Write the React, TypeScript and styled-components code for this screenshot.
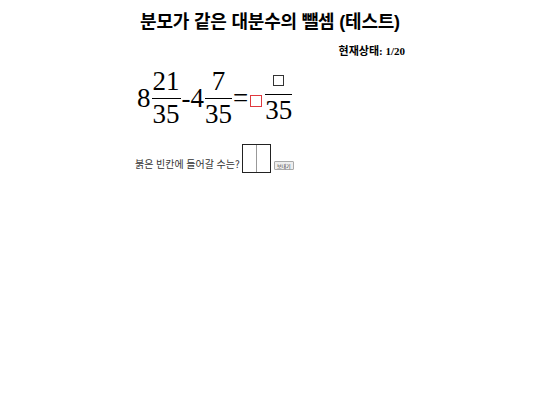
import React from "react";
import styled, { createGlobalStyle } from "styled-components";

const Global = createGlobalStyle`
  html, body { margin: 0; padding: 0; background: #fff; }
  body { font-family: "Liberation Serif", "Noto Sans CJK KR", serif; color: #000; }
`;

const Page = styled.div`
  width: 270px;
  margin: 0 auto;
  padding-top: 10px;
`;

const Title = styled.h2`
  margin: 0;
  font-family: "Liberation Sans", "Noto Sans CJK KR", sans-serif;
  font-size: 18px;
  font-weight: 700;
  text-align: center;
  line-height: 24px;
  letter-spacing: -0.2px;
`;

const Status = styled.div`
  margin-top: 9px;
  text-align: right;
  font-size: 11px;
  font-weight: 700;
  line-height: 14px;
`;

const Hangul = styled.span`
  font-family: "Noto Sans CJK KR", sans-serif;
`;

const MathRow = styled.div`
  margin-top: 10px;
  display: flex;
  align-items: center;
  font-family: "Liberation Serif", serif;
  font-size: 27px;
  line-height: 1;
  padding-left: 2px;
`;

const Whole = styled.span`
  display: inline-block;
`;

const Frac = styled.span`
  display: inline-flex;
  flex-direction: column;
  align-items: stretch;
  text-align: center;
  margin: 0 1px;
`;

const Num = styled.span`
  display: block;
  padding: 0 1px 3px;
  border-bottom: 1px solid #000;
`;

const Den = styled.span`
  display: block;
  padding-top: 2px;
`;

const Op = styled.span`
  display: inline-block;
`;

const Box = styled.span<{ $red?: boolean }>`
  display: inline-block;
  width: ${(p) => (p.$red ? "12px" : "11px")};
  height: ${(p) => (p.$red ? "12px" : "11px")};
  border: 1px solid ${(p) => (p.$red ? "#e0393e" : "#333")};
  box-sizing: border-box;
  margin: ${(p) => (p.$red ? "5px 2px 0 2px" : "0")};
`;

const BoxNum = styled.span`
  display: flex;
  justify-content: center;
  padding: 0 1px 8px;
  height: 23px;
  box-sizing: border-box;
  align-items: flex-end;
  border-bottom: 1px solid #000;
`;

const Question = styled.div`
  margin-top: 16px;
  display: flex;
  align-items: flex-end;
  font-family: "Noto Sans CJK KR", sans-serif;
  font-size: 10px;
  color: #333;
`;

const QText = styled.span`
  line-height: 12px;
  margin-bottom: 3px;
  letter-spacing: 0.1px;
`;

const InputPair = styled.span`
  display: inline-flex;
  margin-left: 2px;
  border: 1px solid #222;
  height: 27px;
`;

const Cell = styled.span<{ $first?: boolean }>`
  display: block;
  width: 13px;
  height: 27px;
  border-right: ${(p) => (p.$first ? "1px solid #999" : "none")};
`;

const SendButton = styled.button`
  margin-left: 3px;
  margin-bottom: 3px;
  padding: 0 2px;
  height: 9px;
  white-space: nowrap;
  font-family: "Noto Sans CJK KR", sans-serif;
  font-size: 5px;
  line-height: 7px;
  color: #333;
  background: #eee;
  border: 1px solid #aaa;
  border-radius: 1px;
`;

export default function App() {
  return (
    <>
      <Global />
      <Page>
        <Title>분모가 같은 대분수의 뺄셈 (테스트)</Title>
        <Status>
          <Hangul>현재상태</Hangul>: 1/20
        </Status>
        <MathRow>
          <Whole>8</Whole>
          <Frac>
            <Num>21</Num>
            <Den>35</Den>
          </Frac>
          <Op>-</Op>
          <Whole>4</Whole>
          <Frac>
            <Num>7</Num>
            <Den>35</Den>
          </Frac>
          <Op>=</Op>
          <Box $red />
          <Frac>
            <BoxNum>
              <Box />
            </BoxNum>
            <Den>35</Den>
          </Frac>
        </MathRow>
        <Question>
          <QText>붉은 빈칸에 들어갈 수는?</QText>
          <InputPair>
            <Cell $first />
            <Cell />
          </InputPair>
          <SendButton>보내기</SendButton>
        </Question>
      </Page>
    </>
  );
}
